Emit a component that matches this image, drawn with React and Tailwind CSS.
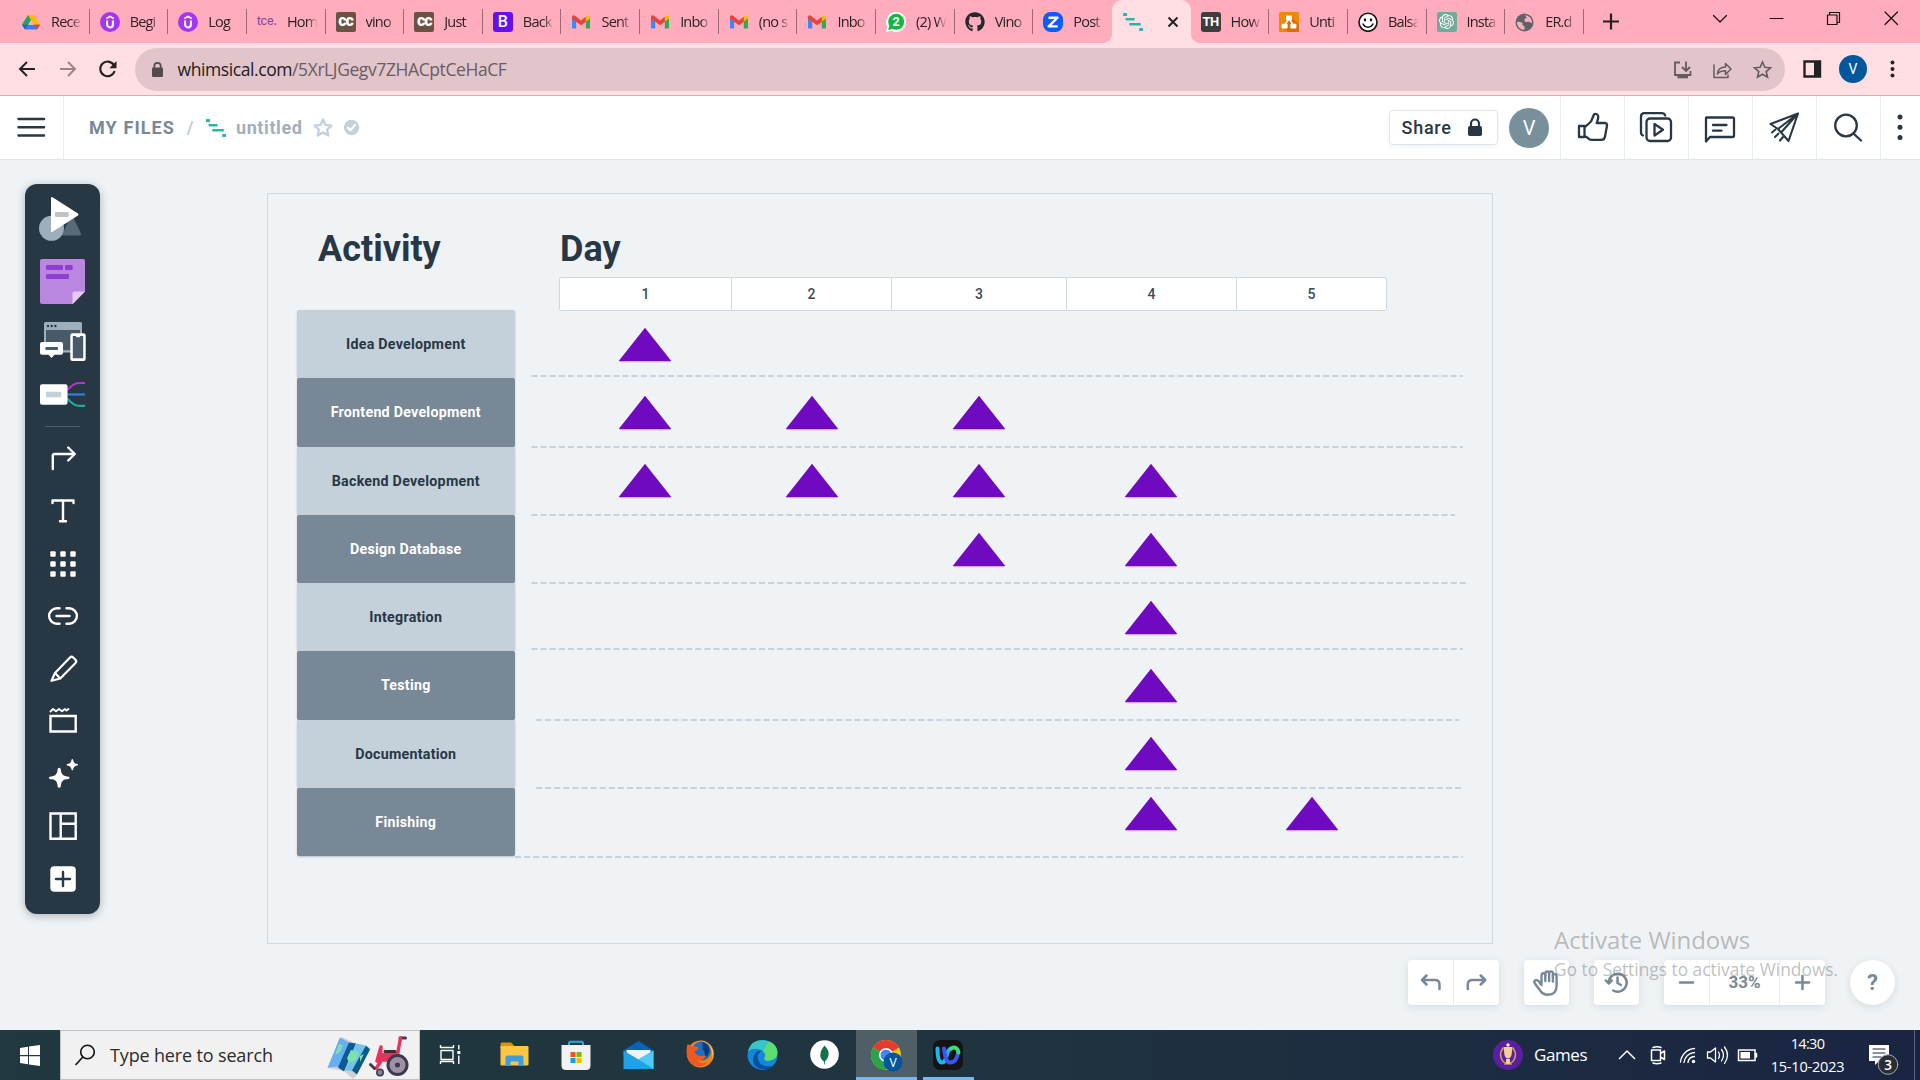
import React from "react";
import { FaGithub } from "react-icons/fa";
import { SiOpenai } from "react-icons/si";

const INK = "#283744";
const STEEL = "#788896";

/* An icon whose shapes are drawn in window coordinates; (x, y) is its top-left corner. */
function Art({ x, y, w, h, className = "", children, ...rest }) {
  return (
    <svg
      width={w}
      height={h}
      viewBox={`${x} ${y} ${w} ${h}`}
      fill="none"
      strokeLinecap="round"
      strokeLinejoin="round"
      className={`block shrink-0 ${className}`}
      {...rest}
    >
      {children}
    </svg>
  );
}

/* ---------- tab favicons, 20x20 ---------- */
const Box = ({ children }) => (
  <svg width="20" height="20" viewBox="0 0 20 20" className="block shrink-0" fill="none">
    {children}
  </svg>
);
const Drive = () => (
  <Box>
    <path d="M7 3h6l-5.9 10.6L4 17.5 1 12.6z" fill="#1ea362" />
    <path d="M7 3h6l6 10h-6z" fill="#ffba00" />
    <path d="M4 17.5 7 12.8h12l-3 4.700z" fill="#3b7df0" />
    <path d="M7 12.800 4 17.500 1 12.800z" fill="#2361d6" />
    <path d="m13 12.800 6 0-2.900 4.600z" fill="#ea4335" />
    <path d="M10 8l2.800 4.800H7.200z" fill="#ffadbc" />
  </Box>
);
const Udemy = () => (
  <Box>
    <circle cx="10" cy="10" r="10" fill="#a435f0" />
    <path d="M6.300 6.600 10 4.400l3.700 2.200" stroke="#fff" strokeWidth="1.700" />
    <path d="M7.100 8.400v4.100a2.900 2.900 0 0 0 5.800 0V8.400" stroke="#fff" strokeWidth="2.100" />
  </Box>
);
const Tce = () => <span className="w-5 shrink-0 font-[Inter,sans-serif] text-[11.5px] font-medium tracking-[-0.2px] text-[#8a4aa0]">tce.</span>;
const Codechef = () => (
  <span className="flex h-5 w-5 shrink-0 items-center justify-center rounded-[2px] bg-[#6b5344] pb-px font-[Roboto,sans-serif] text-[16px] font-black leading-none tracking-[-1px] text-white">cc</span>
);
const Boot = () => (
  <span className="flex h-5 w-5 shrink-0 items-center justify-center rounded-[3px] bg-[#6610f2] font-[Roboto,sans-serif] text-[16px] font-medium leading-none text-white">B</span>
);
const Gmail = () => (
  <Box>
    <path d="M1 4.500v11c0 .6.4 1 1 1h3.200V9z" fill="#4285f4" />
    <path d="M19 4.500v11c0 .6-.4 1-1 1h-3.200V9z" fill="#34a853" />
    <path d="M14.800 4.800V9.600L19 6.600V5c0-1.800-1.900-2.400-3-1.300z" fill="#fbbc04" />
    <path d="M1 5c0-1.800 1.900-2.400 3-1.300l6 4.700 4.800-3.700v5L10 13.300 5.200 9.700 1 6.600z" fill="#ea4335" />
  </Box>
);
const Whats = () => (
  <Box>
    <path d="M10 0a10 10 0 1 1-4.600 18.700L0 20l1.200-5.300A10 10 0 0 1 10 0z" fill="#fff" />
    <circle cx="10.200" cy="9.800" r="8" fill="#12b941" />
    <path d="M2.200 18l1-4.500 3.300 3.400z" fill="#12b941" />
    <text x="10.100" y="14.300" textAnchor="middle" fontFamily="Roboto" fontWeight="700" fontSize="12.500" fill="#fff">2</text>
  </Box>
);
const Zoho = () => (
  <Box>
    <rect width="20" height="20" rx="7.500" fill="#0b5cff" />
    <path d="M5.500 5.700h9L5.700 14.400h9" stroke="#fff" strokeWidth="2.400" strokeLinejoin="round" />
  </Box>
);
const Gantt = ({ size = 20 }) => (
  <svg width={size} height={size} viewBox="0 0 20 20" className="block shrink-0" fill="#2bb5a9">
    <rect x="0" y="1" width="4" height="3" rx=".5" />
    <rect x="2.600" y="6" width="9" height="2.600" rx=".5" />
    <rect x="6.300" y="11" width="11.500" height="2.600" rx=".5" />
    <rect x="16.200" y="16" width="3.800" height="3" rx=".5" />
  </svg>
);
const Th = () => (
  <span className="flex h-5 w-5 shrink-0 items-center justify-center rounded-[3px] bg-[#3d3d3d] font-[Roboto,sans-serif] text-[13px] font-bold leading-none tracking-[-0.6px] text-white">TH</span>
);
const Drawio = () => (
  <Box>
    <rect width="20" height="20" rx="1.500" fill="#f08705" />
    <path d="M13 5l7 8v7H9l-5-5z" fill="#df6c0c" />
    <path d="M10 6.500 5.600 13.500M10 6.500l4.400 7" stroke="#fff" strokeWidth="1.500" />
    <rect x="7" y="3.500" width="6" height="4.800" rx=".8" fill="#fff" />
    <rect x="2.600" y="11.700" width="6" height="4.800" rx=".8" fill="#fff" />
    <rect x="11.400" y="11.700" width="6" height="4.800" rx=".8" fill="#fff" />
  </Box>
);
const Smile = () => (
  <Box>
    <circle cx="10" cy="10.300" r="9" fill="#fff" stroke="#151515" strokeWidth="1.600" />
    <ellipse cx="7" cy="7.800" rx="1.200" ry="1.600" fill="#111" />
    <ellipse cx="13" cy="7.800" rx="1.200" ry="1.600" fill="#111" />
    <path d="M4.800 11.600c1.800 4.800 8.600 4.800 10.400 0" stroke="#111" strokeWidth="1.500" />
  </Box>
);
const Gpt = () => (
  <span className="flex h-5 w-5 shrink-0 items-center justify-center rounded-[2px] bg-[#74aa9c]"><SiOpenai size={15} color="#fff" /></span>
);
const Globe = () => (
  <Box>
    <circle cx="9.500" cy="10.500" r="9" fill="#5f6368" />
    <path d="M2.200 9.500 6.800 10.500q1.500 1 .5 2.500l2.200 1.500v3.300C5 17.800 1.500 14 2.200 9.500zM10 3.300c4.500.3 7.300 3.700 7 8l-3-1.600-3.800.2-1-2.400 2.600-1.800z" fill="#ffadbc" />
  </Box>
);

const TABS = [
  ["Rece", Drive], ["Begi", Udemy], ["Log", Udemy], ["Hom", Tce], ["vino", Codechef], ["Just", Codechef],
  ["Back", Boot], ["Sent", Gmail], ["Inbo", Gmail], ["(no s", Gmail], ["Inbo", Gmail], ["(2) W", Whats],
  ["Vino", () => <FaGithub size={20} color="#24292f" className="shrink-0" />], ["Post", Zoho], null,
  ["How", Th], ["Unti", Drawio], ["Balsa", Smile], ["Insta", Gpt], ["ER.d", Globe],
];

function TabBar() {
  return (
    <div className="flex h-[43px] bg-[#ffadbc] pl-[11px] text-[#2b2226]">
      {TABS.map((t, i) =>
        t === null ? (
          <div key={i} className="relative flex w-[78.65px] shrink-0 items-center rounded-t-[10px] bg-[#ffdfe4] pl-[11px]">
            <Gantt />
            <svg width="12" height="12" viewBox="0 0 12 12" className="ml-6" stroke="#222" strokeWidth="2">
              <path d="M1.500 1.500l9 9M10.500 1.500l-9 9" />
            </svg>
            <div className="absolute -left-[10px] bottom-0 h-[10px] w-[10px] bg-[radial-gradient(circle_at_0_0,transparent_10px,#ffdfe4_10.5px)]" />
            <div className="absolute -right-[10px] bottom-0 h-[10px] w-[10px] bg-[radial-gradient(circle_at_100%_0,transparent_10px,#ffdfe4_10.5px)]" />
          </div>
        ) : (
          <div key={i} className="flex w-[78.65px] shrink-0 items-center pl-[10px]">
            {React.createElement(t[1])}
            <span className="ml-[10px] w-[32px] overflow-hidden whitespace-nowrap font-['Open_Sans',sans-serif] text-[14.5px] tracking-[-0.8px] [mask-image:linear-gradient(to_right,#000_65%,transparent_96%)]">
              {t[0]}
            </span>
            <div className={i === 13 ? "hidden" : "ml-auto h-[25px] w-px bg-[#9c6a74]"} />
          </div>
        )
      )}
      <Art x={1595} y={0} w={32} h={43} className="ml-[11px]" stroke="#222" strokeWidth="2.200">
        <path d="M1603 21.500h16M1611 13.500v16" strokeLinecap="butt" />
      </Art>
      <Art x={1700} y={0} w={220} h={43} className="ml-auto" stroke="#111" strokeWidth="1.200">
        <path d="M1713.500 15.500l6.500 6.500 6.500-6.500" />
        <path d="M1770 18.500h13" />
        <path d="M1827.500 15h9.500v9.500h-9.500zM1829.500 15v-2.500h10v10H1837" />
        <path d="M1885 12l12.500 12.500M1897.500 12L1885 24.500" />
      </Art>
    </div>
  );
}

function AddressBar() {
  return (
    <div className="flex h-[53px] items-center border-b border-[#cdb3b8] bg-[#ffdfe4]">
      <Art x={0} y={43} w={135} h={52} stroke="#222" strokeWidth="2">
        <path d="M35 69H20.500M27 62l-7 7 7 7" strokeLinecap="butt" strokeLinejoin="miter" />
        <path d="M60 69h14.500M68 62l7 7-7 7" stroke="#9a868a" strokeLinecap="butt" strokeLinejoin="miter" />
        <path d="M113.800 65a7.300 7.300 0 1 0 .8 6" strokeWidth="2.100" strokeLinecap="butt" />
        <path d="M116.500 61v7.200h-7.200z" fill="#222" stroke="none" />
      </Art>
      <div className="flex h-[43px] w-[1650px] items-center rounded-full bg-[#e1c5ca]">
        <Art x={135} y={48} w={42.5} h={43}>
          <rect x="152" y="67.500" width="11" height="9.500" rx="1.200" fill="#54494c" />
          <path d="M154.300 68v-2a3.200 3.200 0 0 1 6.400 0v2" stroke="#54494c" strokeWidth="1.700" />
        </Art>
        <span className="whitespace-nowrap font-['Open_Sans',sans-serif] text-[17.5px] tracking-[-0.41px] text-[#6b5c60]">
          <span className="text-[#221c1e]">whimsical.com</span>/5XrLJGegv7ZHACptCeHaCF
        </span>
        <Art x={1665} y={48} w={120} h={43} className="ml-auto" stroke="#665a5d" strokeWidth="1.800">
          <path d="M1680 62.500h-5v12.500h15.500V71M1686 61.500v8.500M1682 67l4 4 4-4" strokeLinejoin="miter" strokeLinecap="butt" />
          <rect x="1677.500" y="75.500" width="10.500" height="2.800" fill="#665a5d" stroke="none" />
          <path d="M1714 65v12.500h14V75M1717.500 74c.3-4.500 3-7 8-7v-3.500l5.500 5.500-5.500 5.500v-3.700c-4 0-6.500 1-8 3.200z" strokeWidth="1.500" />
          <path d="M1762.500 62l2.300 5.300 5.700.5-4.300 3.800 1.300 5.600-5-3-5 3 1.300-5.600-4.300-3.800 5.700-.5z" strokeWidth="1.600" strokeLinejoin="miter" />
        </Art>
      </div>
      <Art x={1785} y={43} w={54} h={52} className="-mr-px">
        <path d="M1804.500 61.500h15.500v15h-15.500z" stroke="#222" strokeWidth="2.400" strokeLinejoin="miter" />
        <path d="M1814 61h6v16h-6z" fill="#222" />
      </Art>
      <div className="ml-[1px] flex h-7 w-7 items-center justify-center rounded-full bg-[#01579b] font-[Roboto,sans-serif] text-[14px] text-white">V</div>
      <Art x={1867} y={43} w={50} h={52} fill="#222">
        <circle cx="1892.500" cy="62.500" r="2" /><circle cx="1892.500" cy="69" r="2" /><circle cx="1892.500" cy="75.500" r="2" />
      </Art>
    </div>
  );
}

function HeaderCell({ x, children }) {
  return (
    <div className="h-[63px] w-16 border-l border-[#e6ecf1]">
      <Art x={x} y={96} w={63} h={63} stroke={INK} strokeWidth="2.300">{children}</Art>
    </div>
  );
}

function Header() {
  return (
    <div className="flex h-16 items-center border-b border-[#dfe4e8] bg-white font-[Roboto,sans-serif] font-bold">
      <div className="h-[63px] w-16 border-r border-[#e6ecf1]">
        <Art x={0} y={96} w={63} h={63} stroke={INK} strokeWidth="2.500">
          <path d="M18.500 119h25.500M18.500 127.300h25.500M18.500 135.500h25.500" />
        </Art>
      </div>
      <span className="ml-[25px] w-[97px] whitespace-nowrap text-[18px] tracking-[1.1px] text-[#788896]">MY FILES</span>
      <svg width="10" height="16" viewBox="0 0 10 16" stroke="#c4d0da" strokeWidth="2"><path d="M6.500 1 1.500 15" /></svg>
      <div className="ml-[10px]"><Gantt /></div>
      <span className="ml-[10px] w-[76px] text-[18px] tracking-[0.6px] text-[#9fb0bd]">untitled</span>
      <Art x={312} y={117} w={22} h={21} stroke="#c4d0da" strokeWidth="2.300">
        <path d="M323 119.500l2.500 5.400 6 .7-4.400 4 1.200 5.900-5.300-3-5.300 3 1.200-5.900-4.400-4 6-.7z" />
      </Art>
      <Art x={343} y={119} w={17} h={17} className="ml-[9px]">
        <circle cx="351.500" cy="127.500" r="7.700" fill="#c4d0da" />
        <path d="M348 127.800l2.500 2.500 4.500-5.300" stroke="#fff" strokeWidth="2.200" />
      </Art>
      <div className="ml-auto mr-[11px] flex h-[35px] w-[109px] items-center rounded-[4px] border border-[#dde6ee] bg-white pl-[11.5px] text-[18px] font-medium tracking-[0.75px] text-[#283744] shadow-[0_2px_4px_rgba(40,55,68,0.06)]">
        <span className="w-[65.5px]">Share</span>
        <Art x={1467} y={117} w={16} h={19}>
          <rect x="1468" y="125" width="14" height="10" rx="1.800" fill={INK} />
          <path d="M1471 125v-2.500a4 4 0 0 1 8 0v2.500" stroke={INK} strokeWidth="2.200" />
        </Art>
      </div>
      <div className="mr-[11px] flex h-10 w-10 items-center justify-center rounded-full bg-[#78909c] text-[20px] font-normal text-white">V</div>
      <HeaderCell x={1561}>
        <path d="M1579 126h5.500v11h-5.500zM1585 127l6-5.500 3-7c1.500-1.200 4.300-.3 4.300 2.300 0 2-.6 3.500-1.600 6.200h8c1.600 0 2.600 1.300 2.300 2.800l-2 10.700c-.4 2.300-1.600 3.300-3.500 3.300h-10c-2 0-3-.7-4-2l-2.500-1.500" />
      </HeaderCell>
      <HeaderCell x={1625}>
        <rect x="1646.500" y="118.500" width="24.500" height="22.500" rx="3.500" />
        <path d="M1643 135.500c-1.500-.5-2-1.700-2-3.300v-15.500c0-2.300 1.200-3.500 3.500-3.500h17c2 0 3.300 1 3.700 2.300" />
        <path d="M1654.500 124v11.500l8.500-5.800z" />
      </HeaderCell>
      <HeaderCell x={1689}>
        <path d="M1706.500 117.500h26c1 0 1.500.5 1.500 1.500v16.500c0 1-.5 1.500-1.500 1.500h-22.500l-4 4.500V118M1713 125h13.500M1713 130.700h8.500" />
      </HeaderCell>
      <HeaderCell x={1753}>
        <path d="M1798 113.500l-27.500 10.500 7.500 5 10.500 12zM1798 113.500L1778 129M1798 113.500l-16.500 18.500" strokeWidth="2.100" />
        <path d="M1775.500 129.500l-3.500 3M1778.500 133.500l-3.500 3.500M1783 137l-3 3.500" strokeWidth="2" />
      </HeaderCell>
      <HeaderCell x={1817}>
        <circle cx="1846" cy="125.500" r="10.800" />
        <path d="M1854 134l7 6.500" />
      </HeaderCell>
      <div className="h-[63px] w-10 border-l border-[#e6ecf1]">
        <Art x={1881} y={96} w={38} h={63} fill={INK}>
          <circle cx="1900" cy="117" r="2.500" /><circle cx="1900" cy="127.200" r="2.500" /><circle cx="1900" cy="137.400" r="2.500" />
        </Art>
      </div>
    </div>
  );
}

function Tool({ y, h, children }) {
  return <Art x={25} y={y} w={75} h={h} stroke="#fff" strokeWidth="2.400">{children}</Art>;
}

function Toolbox() {
  return (
    <div className="mt-6 flex h-[730px] w-[75px] flex-col rounded-[12px] bg-[#283744] shadow-[0_2px_8px_rgba(40,55,68,0.35)]">
      <Tool y={184} h={60}>
        <g stroke="none">
          <path d="M70 217h3l8 16.500q.5 2-1.500 2H62z" fill="#586977" />
          <circle cx="51.500" cy="228.300" r="12.500" fill="#9eaebb" />
          <path d="M51 198q0-1.500 1.500-.8L78 213.500q1 1 0 2L52.500 231.800q-1.500.7-1.500-.8z" fill="#fff" />
          <rect x="55" y="212" width="13.700" height="5" rx="1" fill="#bcc2c6" />
        </g>
      </Tool>
      <Tool y={244} h={70}>
        <g stroke="none">
          <path d="M42 259h41a2 2 0 0 1 2 2v30.500L73 304H42a2 2 0 0 1-2-2V261a2 2 0 0 1 2-2z" fill="#b987e0" />
          <path d="M72.500 304v-10.500a2 2 0 0 1 2-2H85z" fill="#e3cbf3" />
          <g fill="#8f3fd0">
            <rect x="46" y="265" width="17" height="5" rx="1" /><rect x="65" y="265" width="7.700" height="5" rx="1" />
            <rect x="46" y="274" width="23" height="5" rx="1" />
          </g>
        </g>
      </Tool>
      <Tool y={314} h={54}>
        <g stroke="none">
          <rect x="44" y="322" width="38" height="30.500" rx="1.500" fill="#9eaebb" />
          <path d="M46 330h34v20.300H46z" fill="#485a68" />
          <circle cx="48" cy="326" r="1.200" fill={INK} /><circle cx="51.700" cy="326" r="1.200" fill={INK} /><circle cx="55.400" cy="326" r="1.200" fill={INK} />
          <path d="M42 342h19a2 2 0 0 1 2 2v8.700a2 2 0 0 1-2 2h-6.500L51.500 358l-3-3.300H42a2 2 0 0 1-2-2V344a2 2 0 0 1 2-2z" fill="#fff" />
          <rect x="45.300" y="347" width="12.700" height="3" rx="1" fill="#485a68" />
          <rect x="70.300" y="333.300" width="15.400" height="27.700" rx="2.200" fill="#fff" />
          <path d="M72.800 336h3l.7 1.300h3.200l.7-1.300h2.800v22.300H72.800z" fill="#485a68" />
        </g>
      </Tool>
      <Tool y={368} h={52}>
        <g strokeWidth="2.200" strokeLinecap="butt">
          <path d="M67 390c4-3 6-7 12-7h6" stroke="#b833c8" />
          <path d="M67 394.500h18" stroke="#2b83dd" />
          <path d="M67 398.500c4 3 6 7.300 12 7.300h6" stroke="#1aab9b" />
        </g>
        <rect x="40" y="384.300" width="27.500" height="20.400" rx="2" fill="#fff" stroke="none" />
        <rect x="46" y="391.800" width="15.300" height="5.400" rx="1" fill="#c4d0da" stroke="none" />
      </Tool>
      <Tool y={420} h={13}><path d="M45 426.500h35" stroke="#4d5d6a" strokeWidth="1" strokeLinecap="butt" /></Tool>
      <Tool y={433} h={51}><path d="M52.800 469v-13.200q0-1.800 1.800-1.800H74.500M68.200 447.500l6.600 6.500-6.600 6.500" /></Tool>
      <Tool y={484} h={53}><path d="M52.500 503v-2.500h21v2.500M63 500.500v21M60 521.300h6" /></Tool>
      <Tool y={537} h={53}>
        <g fill="#fff" stroke="none">
          {[53, 63, 73].flatMap((cx) => [554, 564, 574].map((cy) => (
            <rect key={`${cx}-${cy}`} x={cx - 2.7} y={cy - 2.7} width="5.400" height="5.400" rx="1" />
          )))}
        </g>
      </Tool>
      <Tool y={590} h={52}><path d="M59.500 608.300h-2.700a7.700 7.700 0 0 0 0 15.400h2.700M66.500 608.300h2.700a7.700 7.700 0 0 1 0 15.400h-2.700M56.500 616h13" /></Tool>
      <Tool y={642} h={53}>
        <path d="M55 673l15-15.500q1.500-1.500 3.200 0l2.300 2.300q1.500 1.700 0 3.200L60.300 678.500 51.500 680.800zM55 673l5.300 5.500" strokeWidth="2.200" />
      </Tool>
      <Tool y={695} h={52}>
        <path d="M50.500 716h25.200v15.500h-25.200z" strokeLinejoin="miter" />
        <path d="M50.500 711.500l2.500-2.500 3 2.300 3-2.300 3 2.300 3-2.300 1.500 1.500 2-1.500" strokeWidth="1.900" />
      </Tool>
      <Tool y={747} h={53}>
        <g fill="#fff" stroke="none">
          <path d="M59.200 767.700q1.800 0 1.800 3.500 1 4.700 5 5 3.500 0 3.500 1.500t-3.500 1.500q-4 .5-5 5 0 3.500-1.800 3.500t-1.800-3.500q-1-4.500-5-5-3.500 0-3.500-1.500t3.500-1.500q4-.3 5-5 0-3.500 1.800-3.500z" />
          <path d="M72.300 759q.9 0 1 1.800.6 2.600 2.900 2.900 1.800 0 1.800 1t-1.800 1q-2.300.3-2.900 2.900-.1 1.800-1 1.800t-1-1.800q-.6-2.600-2.900-2.900-1.800 0-1.800-1t1.800-1q2.300-.3 2.900-2.900.1-1.800 1-1.800z" />
        </g>
      </Tool>
      <Tool y={800} h={53}><path d="M50.500 813.500h25.200v25.200h-25.200zM60.700 813.500v25.200M60.700 823.700h15" strokeLinejoin="miter" /></Tool>
      <Tool y={853} h={58}>
        <rect x="50.300" y="866.300" width="25.500" height="25.500" rx="4" fill="#fff" stroke="none" />
        <path d="M56 879h14M63 872v14" stroke={INK} />
      </Tool>
    </div>
  );
}

/* label, days that carry a marker, dashed rule: y, start, end */
const ROWS = [
  ["Idea Development", [1], 376, 531.5, 1463],
  ["Frontend Development", [1, 2, 3], 447, 531.5, 1463],
  ["Backend Development", [1, 2, 3, 4], 515, 531.5, 1455],
  ["Design Database", [3, 4], 583, 531.5, 1467],
  ["Integration", [4], 649, 531.5, 1463],
  ["Testing", [4], 720, 536, 1459],
  ["Documentation", [4], 788, 536, 1461],
  ["Finishing", [4, 5], 857, 515, 1463],
];

function Chart() {
  return (
    <div className="relative ml-[167px] mt-[33px] h-[751px] w-[1226px] border border-[#cfd9e1] font-[Roboto,sans-serif] text-[#283744]">
      <svg className="absolute inset-0" width="1224" height="749" viewBox="268 194 1224 749">
        {ROWS.map(([label, , y, x1, x2]) => (
          <line key={label} x1={x1} x2={x2} y1={y} y2={y} stroke="#c6d2dc" strokeWidth="2" strokeDasharray="6.100 3" />
        ))}
      </svg>
      <div className="relative flex h-[116px] pl-[29px]">
        <h1 className="w-[262px] pl-[21px] pt-[33px] text-[36px] font-bold leading-[44px]">Activity</h1>
        <div>
          <h1 className="pl-px pt-[33px] text-[36px] font-bold leading-[44px]">Day</h1>
          <div className="mt-[6px] grid h-[34px] grid-cols-[171px_160px_175px_170px_150px] rounded-[2px] border border-[#cdd8e1] bg-white text-[14px] font-medium text-[#3c4a57]">
            {[1, 2, 3, 4, 5].map((d) => (
              <div key={d} className="flex items-center justify-center border-l border-[#cdd8e1] first:border-l-0">{d}</div>
            ))}
          </div>
        </div>
      </div>
      <div className="relative flex flex-col pl-[29px]">
        {ROWS.map(([label, days], i) => (
          <div key={label} className="flex h-[68.3px]">
            <div
              className={`flex w-[217.5px] items-center justify-center rounded-[2px] pt-px text-[14.25px] font-bold tracking-[0.25px] shadow-[0_1px_2px_rgba(40,55,68,0.25)] ${
                i % 2 ? "bg-[#788896] text-white" : "bg-[#c4d0da]"
              }`}
            >
              {label}
            </div>
            <div className="ml-[44.5px] grid grid-cols-[172.5px_160px_174.5px_170.5px_151px] items-center justify-items-center">
              {[1, 2, 3, 4, 5].map((d) => (
                <div key={d}>
                  {days.includes(d) && (
                    <svg width="54" height="36" viewBox="0 0 54 36" className={i === 7 ? "block -mt-4" : "block mt-px"}>
                      <path d="M1.500 34.500h51" stroke="#d3a8ef" strokeWidth="1.500" />
                      <path d="M27 .8 53.300 34H.7z" fill="#700ac0" />
                    </svg>
                  )}
                </div>
              ))}
            </div>
          </div>
        ))}
      </div>
    </div>
  );
}

const CTRL = "flex h-[45px] rounded-[4px] bg-white shadow-[0_2px_8px_rgba(40,55,68,0.12)]";

function Controls() {
  return (
    <div className="absolute bottom-[25px] right-[25px] flex font-[Roboto,sans-serif] text-[#788896]">
      <div className={`${CTRL} mr-[25px] w-[91px]`}>
        <Art x={1408} y={960} w={45} h={45} stroke={STEEL} strokeWidth="2.500">
          <path d="M1439.500 989v-4.500q0-4.500-4.500-4.500h-13M1426.500 975.500l-4.500 4.500 4.500 4.500" />
        </Art>
        <div className="w-px bg-[#e6ecf1]" />
        <Art x={1454} y={960} w={45} h={45} stroke={STEEL} strokeWidth="2.500">
          <path d="M1467.800 989v-4.500q0-4.500 4.500-4.500h12.700M1480.700 975.500l4.500 4.500-4.500 4.500" />
        </Art>
      </div>
      <div className={`${CTRL} mr-[25px] w-[45px]`}>
        <Art x={1524} y={960} w={45} h={45} stroke={STEEL} strokeWidth="2.400">
          <path d="M1541.500 985v-9.500q0-2.200 1.900-2.200t1.900 2.200v-1.700q0-2.300 1.900-2.300t1.900 2.300v-.6q0-1.800 1.900-1.800t1.900 2.100v2.300q0-1.700 1.800-1.700 1.900 0 1.900 2.200v9.200q0 9.300-8.800 9.300-4.700 0-7.500-4l-5.600-7.500q-1.200-2.300 1-3.100 1.700-.4 3 1z" />
          <path d="M1545.300 975v6M1549.100 974v7M1552.900 975.500v6" />
        </Art>
      </div>
      <div className={`${CTRL} mr-[25px] w-[45px]`}>
        <Art x={1594} y={960} w={45} h={45} stroke={STEEL} strokeWidth="2.500">
          <path d="M1608.700 983a9 9 0 1 1 4.500 7.500M1605.800 980.500l2.900 3 3-3M1617.500 977.500v5.500l3.500 2" />
        </Art>
      </div>
      <div className={`${CTRL} mr-[25px] w-[161px]`}>
        <Art x={1664} y={960} w={45} h={45} stroke={STEEL} strokeWidth="2.500"><path d="M1680 982.500h13" /></Art>
        <div className="w-px bg-[#e6ecf1]" />
        <div className="flex w-[69px] items-center justify-center text-[17px] font-bold">33%</div>
        <div className="w-px bg-[#e6ecf1]" />
        <Art x={1780} y={960} w={45} h={45} stroke={STEEL} strokeWidth="2.500"><path d="M1796 982.500h13M1802.500 976v13" /></Art>
      </div>
      <div className="flex h-[45px] w-[45px] items-center justify-center rounded-full bg-white text-[22px] font-bold shadow-[0_2px_8px_rgba(40,55,68,0.12)]">?</div>
    </div>
  );
}

/* Taskbar application slot, 62px wide, art centred on cx */
function Slot({ cx, className = "", children }) {
  return <Art x={cx - 31} y={1030} w={62} h={50} className={className}>{children}</Art>;
}

function Taskbar() {
  return (
    <div className="flex h-[50px] items-center bg-gradient-to-r from-[#20383f] via-[#20343f] to-[#1a2442] font-['Open_Sans',sans-serif] text-white">
      <Art x={0} y={1030} w={60} h={50} fill="#fff">
        <path d="M20 1048l8-1.200v8.300H20zM29 1046.600l11-1.600v10.100H29zM20 1056.200h8v8L20 1063zM29 1056.200h11v9.800l-11-1.600z" />
      </Art>
      <div className="flex h-[50px] w-[360px] items-center border border-[#bfc1c2] bg-[#f1f1f1] text-[18px] tracking-[-0.15px] text-[#2c2c2c]">
        <Art x={61} y={1031} w={49} h={48} stroke="#111" strokeWidth="1.600">
          <circle cx="87.500" cy="1052" r="6.800" /><path d="M82.800 1057l-6.800 7.500" />
        </Art>
        <span className="whitespace-nowrap">Type here to search</span>
        <Art x={324} y={1031} w={95} h={48} className="ml-auto">
          <path d="M341 1037l3 1 13 6 14 4-15 28-3 3-9-8-17-3z" fill="#d5d0cf" />
          <path d="M340 1037.500l-12 30 10-3z" fill="#5da4f0" />
          <path d="M340 1037.500l9 5-7 24-14 1z" fill="#68aef5" />
          <path d="M349 1042.500l7 1-12 28-6-4z" fill="#0d5a94" />
          <path d="M356 1043.500l10 2-9 26-12-1z" fill="#74c2e8" />
          <path d="M366 1045.500l4 4-13 25-5-4z" fill="#0b5a8c" />
          <path d="M339 1044l4 1-3 7-5 3zM351 1050l8 2-3 8-7 3-2-5zM360 1056l4-2-4 8z" fill="#7ee0b0" />
          <path d="M400 1038h5.500" stroke="#47374e" strokeWidth="3" />
          <path d="M400.500 1038l-4 22h-15l-5 8M381 1048l-1 12M381 1047l-4 14" stroke="#e8335f" strokeWidth="3.500" />
          <path d="M382 1053h14v6h-16z" fill="#e8335f" /><path d="M385 1051.500h10" stroke="#47243a" strokeWidth="3" />
          <circle cx="397.500" cy="1065" r="9.500" fill="#9b93a5" stroke="#40384e" strokeWidth="3" />
          <circle cx="397.500" cy="1065" r="2.500" fill="#40384e" />
          <circle cx="380" cy="1072.500" r="3.200" fill="#8a8296" stroke="#40384e" strokeWidth="1.500" />
          <path d="M370.500 1064.500l4 4" stroke="#40384e" strokeWidth="3" />
        </Art>
      </div>
      <Slot cx={450} className="-ml-px">
        <g stroke="#fff" strokeWidth="1.400" strokeLinecap="butt">
          <path d="M441 1050.500h12v9h-12zM440.500 1045v2.500h13V1045M440.500 1064v-2.500h13v2.500M458.800 1045v4.500M458.800 1055.500v8.500" />
        </g>
        <rect x="457.300" y="1051" width="3" height="3" fill="#fff" />
      </Slot>
      <Slot cx={513.5} className="ml-[1.5px]">
        <path d="M500 1044q0-1.500 1.500-1.500h9l3 3v3H500z" fill="#d99400" />
        <rect x="500" y="1046" width="28" height="19.500" rx="1.200" fill="#fcc644" />
        <path d="M505 1066v-8.500q0-2 2-2h14q2 0 2 2v8.500h-5v-4.500h-8v4.500z" fill="#3f9ddf" />
      </Slot>
      <Slot cx={575.5}>
        <path d="M568.500 1046v-3q0-1.300 1.300-1.300h11.400q1.300 0 1.300 1.300v3" stroke="#27aae1" strokeWidth="2" />
        <path d="M561 1045h29v20.500q0 4.500-4.500 4.500h-20q-4.500 0-4.500-4.500z" fill="#f2f2f2" />
        <path d="M570 1052h5v5h-5z" fill="#f25022" /><path d="M576 1052h5v5h-5z" fill="#7fba00" />
        <path d="M570 1058h5v5h-5z" fill="#00a4ef" /><path d="M576 1058h5v5h-5z" fill="#ffb900" />
      </Slot>
      <Slot cx={637.5}>
        <path d="M623 1050.500l15-9.500 15 9.500v6h-30z" fill="#0a62b5" />
        <path d="M626 1050h24v8l-12 5-12-5z" fill="#f4f4f4" />
        <path d="M623 1050.500l15 9 15-9v18.500H623z" fill="#1fa2e6" />
        <path d="M653 1050.500v18.500l-18-11.500 3 2z" fill="#4ecbf5" />
      </Slot>
      <Slot cx={699.5}>
        <circle cx="700" cy="1054" r="13.500" fill="#f2801f" />
        <path d="M700 1040.500a13.500 13.500 0 0 1 11 20q3-8-3-15-4-4-8-5z" fill="#ffd23f" />
        <circle cx="701" cy="1051" r="9.500" fill="#1f6fc0" />
        <path d="M702 1042q6 2 7 8-1 7-6 9 3-6-1-10z" fill="#0c3b7c" />
        <path d="M687 1044q3 1 4 3 5-2 7 1-1 3-4 3 1 5 7 5 3-1 5 0-3 5-9 4 3 5 10 2-6 7-14 3-7-5-7-13 0-4 1-8z" fill="#ee5a1e" />
      </Slot>
      <Slot cx={761.5}>
        <circle cx="762" cy="1055" r="15" fill="#1487d8" />
        <path d="M747.500 1051q3-11 14.500-11 14 1 15 12 0 8-9 9-5 0-4-3 2-3-1-6-7-6-15.500-1z" fill="#35c6c5" />
        <path d="M768 1041.500q8 3 9 11 0 7-9 8-5 0-4-3 2-3-1-6z" fill="#5fdc6e" />
        <path d="M762 1050q-7 4-4 11t14 5q-4 5-12 3-9-3-7-12 2-7 9-7z" fill="#0c4f9f" />
      </Slot>
      <Slot cx={823.5}>
        <circle cx="824" cy="1054.500" r="14.300" fill="#fff" />
        <path d="M824 1045.500q5 5 4 10-1 4-3.600 6l-.2 3h-.6l-.2-3q-3.500-2.500-3.600-6 0-5 4.200-10z" fill="#13724c" />
      </Slot>
      <div className="ml-[1.5px] h-[50px] w-[61px] border-b-[3px] border-[#76b9ed] bg-[#4e5f68]">
        <Art x={856} y={1030} w={61} h={50}>
          <circle cx="886" cy="1055" r="15" fill="#fbc116" />
          <path d="M886 1055l-13-7.500a15 15 0 0 1 26 0z" fill="#e33b2e" />
          <path d="M886 1055l-13-7.500A15 15 0 0 0 886 1070z" fill="#2ba24c" />
          <circle cx="886" cy="1055" r="7" fill="#fff" /><circle cx="886" cy="1055" r="5.500" fill="#4285f4" />
          <circle cx="893" cy="1062" r="9.500" fill="#01579b" />
          <text x="893" y="1066.500" textAnchor="middle" fontFamily="Roboto" fontSize="12" fill="#fff">V</text>
        </Art>
      </div>
      <div className="ml-[6px] h-[50px] w-[51px] border-b-[3px] border-[#76b9ed]">
        <Art x={923} y={1030} w={51} h={50}>
          <rect x="933" y="1040" width="30" height="30" rx="7" fill="#141414" />
          <path d="M937.500 1048.500q0 14 4.500 14 3 0 4.500-6.500t4-7" stroke="#1fb6f0" strokeWidth="4" />
          <path d="M944 1048.500q1.500 14 6 14 6.500 0 8-9.500" stroke="#3a57f5" strokeWidth="4" />
          <path d="M951 1048.500q6-3 7.500 4" stroke="#3ddb7a" strokeWidth="4" />
        </Art>
      </div>
      <div className="ml-auto flex h-[50px] items-center">
        <Art x={1493} y={1030} w={41} h={50}>
          <circle cx="1508" cy="1055" r="15" fill="#5a1fa0" />
          <path d="M1503.500 1047h9l-1 8q-1 3.500-3.500 3.500t-3.500-3.500zM1506 1059h4v3l2 2.500h-8l2-2.500z" fill="#f3cf94" />
          <path d="M1503 1048q-6 9 2.500 15.500M1513 1048q6 9-2.500 15.500" stroke="#d79a55" strokeWidth="1.500" />
          <circle cx="1508" cy="1045" r="1.800" fill="#fbe7b8" />
        </Art>
        <span className="w-[80px] text-[17px] tracking-[-0.4px]">Games</span>
        <Art x={1614} y={1030} w={154} h={50} stroke="#fff" strokeWidth="1.500">
          <path d="M1619 1059l8-8 8 8" strokeLinecap="butt" />
          <path d="M1651.500 1050h9v10.500h-9zM1660.500 1053.500l4-2.500v8.500l-4-2.500M1653 1047.500q4-1.500 8 0M1653 1063q4 1.500 8 0" />
          <g strokeWidth="1.300">
            <path d="M1680.500 1062a15 15 0 0 1 14-13.500M1684 1062.500a11 11 0 0 1 10.500-10M1688 1062.500a7 7 0 0 1 6.500-6" />
          </g>
          <circle cx="1693.500" cy="1061.500" r="1.700" fill="#fff" stroke="none" />
          <path d="M1707.500 1052h3l5-4v14l-5-4h-3zM1718.500 1052q2 3 0 6.500M1721.500 1049.500q4 5.500 0 11.500M1724.500 1047q6 8 0 16.500" strokeWidth="1.300" />
          <path d="M1738.500 1050h16.500v10.500h-16.500zM1756.500 1053.500v3.500" strokeLinejoin="miter" />
          <path d="M1740.500 1052h9.500v6.500h-9.500z" fill="#fff" stroke="none" />
        </Art>
        <div className="flex w-[80px] flex-col items-center pr-px text-[14.5px] leading-[23px]">
          <span className="tracking-[-0.7px]">14:30</span>
          <span className="tracking-[-0.2px]">15-10-2023</span>
        </div>
        <Art x={1848} y={1030} w={66} h={50}>
          <path d="M1869 1045h20v16h-10l-4 4v-4h-6z" fill="#fff" />
          <path d="M1873 1049h12M1873 1053h12M1873 1057h8" stroke="#1b2741" strokeWidth="1.200" />
          <circle cx="1888" cy="1064.500" r="9.800" fill="#2b2f35" stroke="#a5a9ae" strokeWidth="1" />
          <text x="1888" y="1069.500" textAnchor="middle" fontFamily="Open Sans" fontWeight="600" fontSize="13.500" fill="#fff">3</text>
        </Art>
        <div className="mr-[5px] h-[50px] w-px bg-[#5d6780]" />
      </div>
    </div>
  );
}

export default function App() {
  return (
    <div className="flex h-[1080px] w-[1920px] flex-col overflow-hidden bg-[#eff3f6]">
      <TabBar />
      <AddressBar />
      <Header />
      <div className="relative flex h-[870px] pl-[25px]">
        <Toolbox />
        <Chart />
        <Controls />
        <div className="pointer-events-none absolute bottom-[46px] left-[1554px] whitespace-nowrap font-['Open_Sans',sans-serif] text-[#6f6f6f]/45">
          <div className="text-[24px] leading-[30px] tracking-[-0.05px]">Activate Windows</div>
          <div className="text-[17.35px] leading-[29px]">Go to Settings to activate Windows.</div>
        </div>
      </div>
      <Taskbar />
    </div>
  );
}
